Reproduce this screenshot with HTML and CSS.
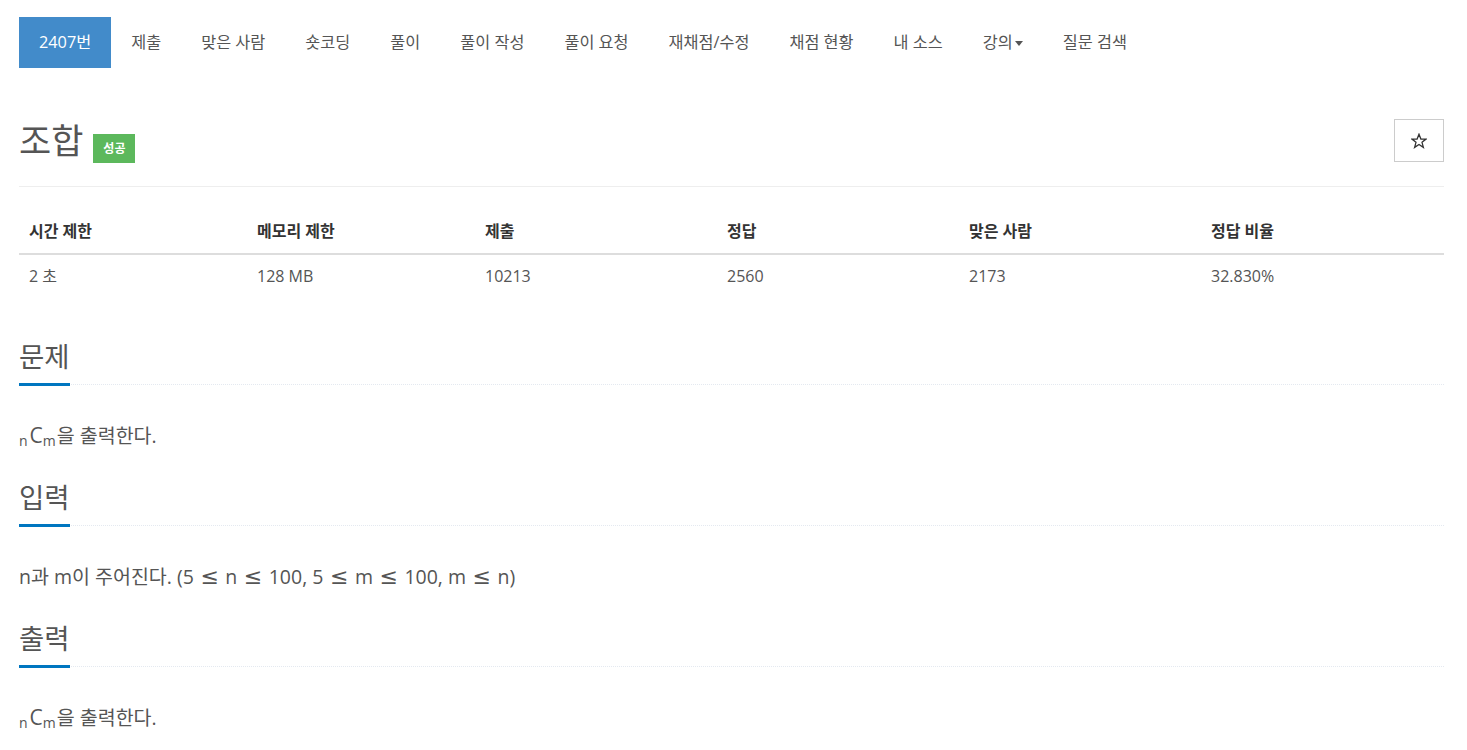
FILE: index.html
```html
<!DOCTYPE html>
<html lang="ko">
<head>
  <meta charset="UTF-8">
  <title>2407번: 조합</title>
  <link rel="stylesheet" href="styles.css">
</head>
<body>

  <div class="wrap">
    <ul class="problem-menu">
      <li class="active"><a href="#">2407번</a></li>
      <li><a href="#">제출</a></li>
      <li><a href="#">맞은 사람</a></li>
      <li><a href="#">숏코딩</a></li>
      <li><a href="#">풀이</a></li>
      <li><a href="#">풀이 작성</a></li>
      <li><a href="#">풀이 요청</a></li>
      <li><a href="#">재채점/수정</a></li>
      <li><a href="#">채점 현황</a></li>
      <li><a href="#">내 소스</a></li>
      <li><a href="#">강의<span class="caret"></span></a></li>
      <li><a href="#">질문 검색</a></li>
    </ul>

    <div class="page-header">
      <h1>
        <span class="title">조합</span>
        <span class="label-ac">성공</span>
      </h1>
      <button class="star-btn" title="즐겨찾기">
        <svg width="16" height="16" viewBox="0 0 16 16">
          <polygon points="8,1.2 9.9,6 15,6.1 11,9.3 12.4,14.4 8,11.5 3.6,14.4 5,9.3 1,6.1 6.1,6"
                   fill="none" stroke="#333" stroke-width="1.3" stroke-linejoin="miter"/>
        </svg>
      </button>
    </div>

    <table class="problem-info">
      <thead>
        <tr>
          <th class="c1">시간 제한</th>
          <th class="c2">메모리 제한</th>
          <th class="c3">제출</th>
          <th class="c4">정답</th>
          <th class="c5">맞은 사람</th>
          <th>정답 비율</th>
        </tr>
      </thead>
      <tbody>
        <tr>
          <td>2 초</td>
          <td>128 MB</td>
          <td>10213</td>
          <td>2560</td>
          <td>2173</td>
          <td>32.830%</td>
        </tr>
      </tbody>
    </table>

    <section class="problem-section">
      <div class="headline"><h2>문제</h2></div>
      <p class="problem-text"><span class="math"><sub>n</sub>C<sub>m</sub></span>을 출력한다.</p>
    </section>

    <section class="problem-section">
      <div class="headline"><h2>입력</h2></div>
      <p class="problem-text">n과 m이 주어진다. (5<span class="le">≤</span>n<span class="le">≤</span>100, 5<span class="le">≤</span>m<span class="le">≤</span>100, m<span class="le">≤</span>n)</p>
    </section>

    <section class="problem-section">
      <div class="headline"><h2>출력</h2></div>
      <p class="problem-text"><span class="math"><sub>n</sub>C<sub>m</sub></span>을 출력한다.</p>
    </section>
  </div>

</body>
</html>
```

FILE: styles.css
```css
body {
  margin: 0;
  font-family: "Open Sans", "Noto Sans CJK KR", sans-serif;
  font-size: 16px;
  line-height: 20px;
  color: #555;
  background: #fff;
}
.wrap {
  padding: 17px 23px 40px 19px;
}

/* top menu */
.problem-menu {
  display: flex;
  list-style: none;
  margin: 0; padding: 0;
}
.problem-menu a {
  display: block;
  padding: 15px 20px 16px;
  font-size: 16.3px;
  line-height: 20px;
  color: #555;
  text-decoration: none;
}
.problem-menu .active a {
  background: #428bca;
  color: #fff;
}
.caret {
  display: inline-block;
  width: 0; height: 0;
  margin-left: 2px;
  vertical-align: middle;
  border-top: 5px solid #555;
  border-left: 4px solid transparent;
  border-right: 4px solid transparent;
}

/* title */
.page-header {
  display: flex;
  justify-content: space-between;
  align-items: center;
  margin-top: 32px;
  padding: 18px 0 23px;
  border-bottom: 1px solid #eee;
}
.page-header h1 {
  display: flex;
  align-items: center;
  margin: 0;
  font-size: 35px;
  line-height: 43px;
  font-weight: 400;
  color: #555;
}
.label-ac {
  margin: 16px 0 0 10px;
  width: 42px; height: 29px;
  line-height: 29px;
  text-align: center;
  font-size: 12px;
  font-weight: 700;
  color: #fff;
  background: #5cb85c;
}
.star-btn {
  width: 50px; height: 43px;
  display: flex;
  align-items: center;
  justify-content: center;
  background: #fff;
  border: 1px solid #ccc;
  padding: 0;
}

/* info table */
.problem-info {
  width: 100%;
  border-collapse: collapse;
  margin-top: 24px;
}
.problem-info th {
  text-align: left;
  font-weight: 700;
  color: #333;
  padding: 10px 8px 12px 10px;
  border-bottom: 2px solid #ddd;
}
.problem-info td {
  padding: 11px 8px 9px 10px;
  color: #555;
}
.problem-info .c1, .problem-info .c2 { width: 210px; }
.problem-info .c3, .problem-info .c4, .problem-info .c5 { width: 224px; }

/* sections */
.problem-section {
  margin-top: 44px;
}
.problem-section + .problem-section {
  margin-top: 30px;
}
.headline {
  border-bottom: 1px dotted #e4e9f0;
}
.headline h2 {
  display: inline-block;
  margin: 0 0 -2px;
  padding-bottom: 8px;
  font-size: 27.5px;
  line-height: 36px;
  font-weight: 400;
  color: #555;
  border-bottom: 3px solid #0076c0;
}
.problem-text {
  margin: 36px 0 0;
  font-size: 19.5px;
  line-height: 29px;
  color: #555;
}
.math {
  font-size: 21px;
  margin-right: 1px;
}
.math sub {
  font-size: 14px;
  line-height: 0;
  vertical-align: -3px;
}
.math sub:first-child {
  margin-right: 2px;
}
.le {
  font-family: "DejaVu Sans", sans-serif;
  font-size: 22px;
  line-height: 0;
  margin: 0 6.5px;
}
```
